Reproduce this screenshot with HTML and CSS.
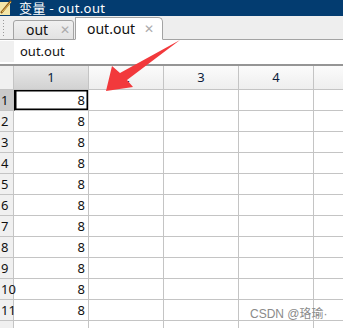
FILE: index.html
```html
<!DOCTYPE html>
<html>
<head>
<meta charset="utf-8">
<link rel="stylesheet" href="styles.css">
</head>
<body>
<div class="app">
  <div class="title">
    <svg class="ticon" width="12" height="16" viewBox="0 0 12 16">
      <rect x="0" y="2" width="10" height="13" fill="#f4e6a8"/>
      <path d="M1 13 L11 1" stroke="#8a5a1a" stroke-width="2"/>
      <path d="M2 12 L11 2" stroke="#e9c15a" stroke-width="1"/>
    </svg>
    <span class="ttext">变量 - out.out</span>
  </div>
  <div class="tabs">
    <div class="grip"></div>
    <div class="tab">
      <span class="tlabel">out</span>
      <span class="close">✕</span>
    </div>
    <div class="tab active">
      <span class="tlabel">out.out</span>
      <span class="close">✕</span>
    </div>
  </div>
  <div class="varrow">
    <div class="vbox"></div>
    <span class="vname">out.out</span>
  </div>
  <div class="sep"></div>
  <div class="grid">
    <div class="c rh corner"></div>
    <div class="c ch sel">1</div>
    <div class="c ch">2</div>
    <div class="c ch">3</div>
    <div class="c ch">4</div>
    <div class="c ch last"></div>

    <div class="c rh rsel">1</div><div class="c num cur">8</div><div class="c"></div><div class="c"></div><div class="c"></div><div class="c last"></div>
    <div class="c rh">2</div><div class="c num">8</div><div class="c"></div><div class="c"></div><div class="c"></div><div class="c last"></div>
    <div class="c rh">3</div><div class="c num">8</div><div class="c"></div><div class="c"></div><div class="c"></div><div class="c last"></div>
    <div class="c rh">4</div><div class="c num">8</div><div class="c"></div><div class="c"></div><div class="c"></div><div class="c last"></div>
    <div class="c rh">5</div><div class="c num">8</div><div class="c"></div><div class="c"></div><div class="c"></div><div class="c last"></div>
    <div class="c rh">6</div><div class="c num">8</div><div class="c"></div><div class="c"></div><div class="c"></div><div class="c last"></div>
    <div class="c rh">7</div><div class="c num">8</div><div class="c"></div><div class="c"></div><div class="c"></div><div class="c last"></div>
    <div class="c rh">8</div><div class="c num">8</div><div class="c"></div><div class="c"></div><div class="c"></div><div class="c last"></div>
    <div class="c rh">9</div><div class="c num">8</div><div class="c"></div><div class="c"></div><div class="c"></div><div class="c last"></div>
    <div class="c rh">10</div><div class="c num">8</div><div class="c"></div><div class="c"></div><div class="c"></div><div class="c last"></div>
    <div class="c rh">11</div><div class="c num">8</div><div class="c"></div><div class="c"></div><div class="c"></div><div class="c last"></div>
    <div class="c rh"></div><div class="c num"></div><div class="c"></div><div class="c"></div><div class="c"></div><div class="c last"></div>
  </div>
  <svg class="arrow" width="343" height="328" viewBox="0 0 343 328">
    <polygon points="106,91 112,66 120,73 180,40 127,80 133,87" fill="#f2393c"/>
  </svg>
  <div class="wm">CSDN @珞瑜·</div>
</div>
</body>
</html>
```
FILE: styles.css
```css
* { box-sizing: border-box; }
html, body { margin: 0; padding: 0; background: #fff; overflow: hidden; }
body { width: 343px; height: 328px; font-family: "Noto Sans", "Noto Sans CJK SC", sans-serif; }
.app { position: relative; width: 343px; height: 328px; overflow: hidden; }

.title {
  height: 16px; background: #033c70; color: #fff;
  display: flex; align-items: center; gap: 7px;
  font-size: 13px; line-height: 15px; letter-spacing: 0.4px;
}
.ticon { display: block; flex: none; }

.tabs {
  height: 24px; background: #eeeeee; border-bottom: 1px solid #a3a3a3;
  display: flex; align-items: flex-end; padding-left: 2px;
}
.grip {
  width: 3px; height: 18px; margin: 0 8px 2px 0;
  background-image: radial-gradient(circle, #9a9a9a 0.8px, transparent 1px);
  background-size: 3px 3px;
}
.tab {
  width: 61px; height: 20px; margin-bottom: -1px;
  background: linear-gradient(#f0f0f0, #e2e2e2);
  border: 1px solid #a3a3a3; border-radius: 3px 3px 0 0;
  display: flex; align-items: center; justify-content: space-between;
  padding: 0 3px 1px 12px; font-size: 14px; color: #111;
}
.tab.active {
  width: 88px; height: 23px; background: #fff; border-bottom-color: #fff;
  border-radius: 0 5px 0 0; margin-left: 1px;
  padding: 0 8px 0 11px;
}
.tlabel { line-height: 18px; }
.close { font-size: 12px; color: #ababab; }

.varrow { height: 22px; display: flex; align-items: center; }
.vbox { width: 14px; height: 21px; background: #f0f0f0; margin-right: 6px; }
.vname { font-size: 13px; color: #111; }

.sep { height: 4px; border-bottom: 2px solid #959595; }

.grid {
  display: grid;
  grid-template-columns: 14px 75px 75px 75px 75px 29px;
}
.c {
  height: 21px; border-right: 1px solid #c4c4c4; border-bottom: 1px solid #c4c4c4;
  font-size: 13px; line-height: 20px; color: #111;
}
.c.last { border-right: none; }
.ch {
  height: 24px; line-height: 23px; text-align: center;
  background: linear-gradient(#fbfbfb, #eeeeee); color: #0d1d3c;
}
.ch.sel { background: linear-gradient(#e8e8e8, #d2d2d2); }
.corner { height: 24px; background: #f2f2f2; }
.rh { background: #f0f0f0; padding-left: 1px; font-size: 13px; }
.rh.rsel { background: #c9c9c9; }
.num { text-align: right; padding-right: 3px; }
.cur { box-shadow: inset 0 0 0 1.5px #000; border-left: 1px solid #000; }

.arrow { position: absolute; left: 0; top: 0; pointer-events: none; }
.wm {
  position: absolute; left: 250px; top: 304px;
  font-size: 12px; color: #8a8a8a; font-family: "Liberation Sans", "Noto Sans CJK SC", sans-serif;
}
```
